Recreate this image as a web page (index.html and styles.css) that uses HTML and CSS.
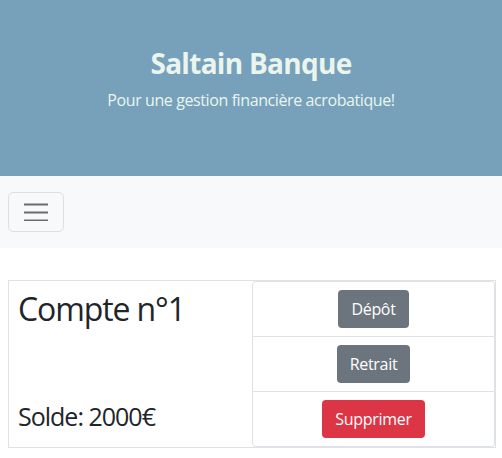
FILE: index.html
```html
<!DOCTYPE html>
<html lang="fr">
<head>
<meta charset="utf-8">
<title>Saltain Banque</title>
<link rel="stylesheet" href="styles.css">
</head>
<body>
<header class="hero">
  <h1 class="hero-title">Saltain Banque</h1>
  <p class="hero-sub">Pour une gestion financière acrobatique!</p>
</header>
<nav class="navbar">
  <button class="toggler" type="button" aria-label="Menu">
    <svg width="24" height="18" viewBox="0 0 24 18"><path d="M0 1.5h24M0 9.5h24M0 17.5h24" stroke="#6c6c6c" stroke-width="2" fill="none"/></svg>
  </button>
</nav>
<main class="content">
  <div class="account">
    <div class="account-info">
      <h2 class="account-name">Compte n°1</h2>
      <h3 class="account-balance">Solde: 2000€</h3>
    </div>
    <ul class="actions">
      <li class="action"><button class="btn btn-secondary">Dépôt</button></li>
      <li class="action"><button class="btn btn-secondary">Retrait</button></li>
      <li class="action"><button class="btn btn-danger">Supprimer</button></li>
    </ul>
  </div>
</main>
</body>
</html>
```
FILE: styles.css
```css
* { box-sizing: border-box; }
body {
  margin: 0;
  font-family: "Open Sans", "Noto Sans", sans-serif;
  color: #212529;
  background: #fff;
}
.hero {
  background: #77a1bb;
  height: 176px;
  padding-top: 47px;
  text-align: center;
  color: #eaf5ee;
}
.hero-title {
  margin: 0 0 7px;
  font-size: 28px;
  line-height: 1.2;
  font-weight: 700;
  letter-spacing: -0.7px;
}
.hero-sub {
  margin: 0;
  font-size: 16px;
  line-height: 24px;
  letter-spacing: -0.4px;
}
.navbar {
  background: #f8f9fa;
  height: 72px;
  padding: 16px 8px;
}
.toggler {
  width: 56px;
  height: 40px;
  border: 1px solid rgba(0,0,0,.1);
  border-radius: 5px;
  background: transparent;
  display: flex;
  align-items: center;
  justify-content: center;
  padding: 0;
}
.content { padding: 32px 6px 0 8px; }
.account {
  display: flex;
  border: 1px solid #dee2e6;
}
.account-info {
  flex: 1;
  padding: 9px 9px;
  display: flex;
  flex-direction: column;
  justify-content: space-between;
}
.account-name {
  margin: 0;
  font-size: 32px;
  line-height: 1.2;
  font-weight: 500;
  letter-spacing: -1.1px;
}
.account-balance {
  margin: 0 0 7px;
  font-size: 25px;
  line-height: 1.2;
  font-weight: 500;
  letter-spacing: -1px;
}
.actions {
  width: 243px;
  flex: none;
  list-style: none;
  margin: 0;
  padding: 0;
  border: 1px solid #dee2e6;
  border-radius: 4px;
}
.action {
  padding: 8px;
  text-align: center;
  height: 55px;
  border-top: 1px solid #dee2e6;
}
.action:first-child { border-top: 0; height: 54px; }
.btn {
  font-family: inherit;
  font-size: 16px;
  line-height: 24px;
  padding: 6px 12px;
  border: 1px solid transparent;
  border-radius: 4px;
  color: #fff;
  letter-spacing: -0.3px;
}
.btn-secondary { background: #6c757d; }
.btn-danger { background: #dc3545; }
```
